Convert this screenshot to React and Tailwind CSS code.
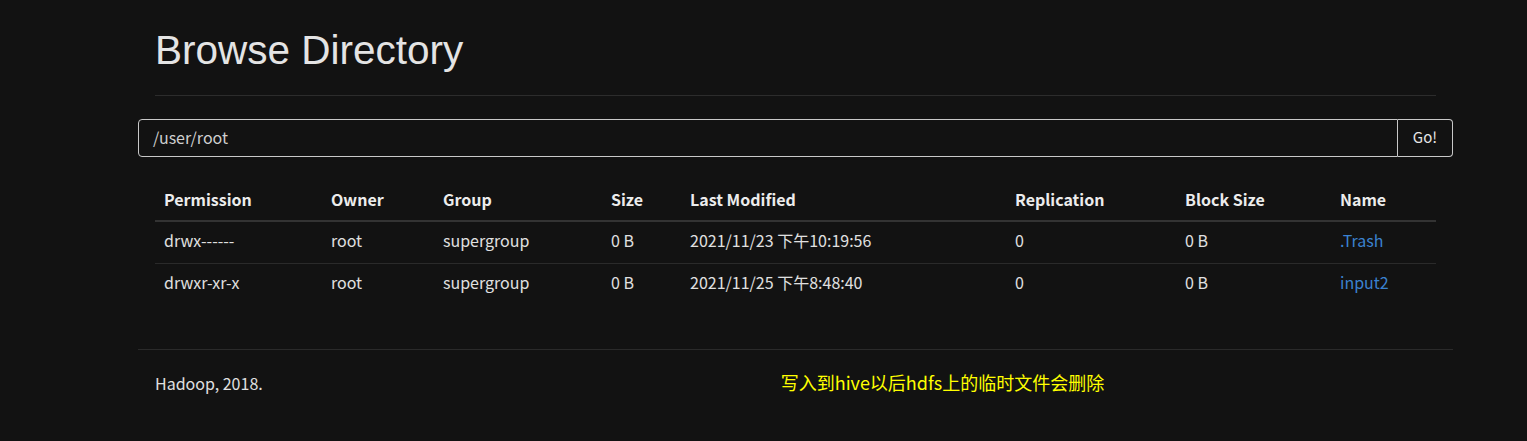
export default function App() {
  const rows = [
    { perm: 'drwx------', owner: 'root', group: 'supergroup', size: '0 B', mod: '2021/11/23 下午10:19:56', rep: '0', block: '0 B', name: '.Trash' },
    { perm: 'drwxr-xr-x', owner: 'root', group: 'supergroup', size: '0 B', mod: '2021/11/25 下午8:48:40', rep: '0', block: '0 B', name: 'input2' },
  ];
  const heads = ['Permission', 'Owner', 'Group', 'Size', 'Last Modified', 'Replication', 'Block Size', 'Name'];
  const widths = ['w-[167px]', 'w-[112px]', 'w-[168px]', 'w-[79px]', 'w-[325px]', 'w-[170px]', 'w-[155px]', 'w-auto'];

  return (
    <div className="min-h-screen bg-[#121212] text-[#e0e0e0] font-['Noto_Sans_CJK_SC',sans-serif] text-[16px]">
      <div className="ml-[138px] w-[1315px]">
        {/* header */}
        <div className="px-[17px] pt-[26px]">
          <h1 className="font-['Liberation_Sans',Arial,sans-serif] text-[40.5px] leading-[48px] text-[#e4e4e4]">
            Browse Directory
          </h1>
          <div className="mt-[21px] border-t border-[#2c2c2c]" />
        </div>

        {/* path input */}
        <div className="mt-[23px] flex h-[38px]">
          <div className="flex-1 flex items-center pl-[14px] pb-[3px] border border-[#c8c8c8] rounded-l-[4px] text-[#cfcfcf]">
            /user/root
          </div>
          <button className="w-[55px] pb-[2px] border border-l-0 border-[#c8c8c8] rounded-r-[4px] text-[#e6e6e6] text-[15px]">
            Go!
          </button>
        </div>

        {/* listing */}
        <div className="px-[17px] mt-[21px]">
          <table className="w-full table-fixed border-collapse">
            <thead>
              <tr className="border-b-2 border-[#333]">
                {heads.map((h, i) => (
                  <th key={h} className={`${widths[i]} text-left font-bold pl-[9px] pb-[1px] h-[43px] text-[#ececec]`}>
                    {h}
                  </th>
                ))}
              </tr>
            </thead>
            <tbody>
              {rows.map((r, idx) => (
                <tr key={r.name} className={`${idx === 0 ? 'border-b border-[#2a2a2a]' : ''} [&>td]:pl-[9px] [&>td]:pb-[4px]`}>
                  <td className="h-[42px]">{r.perm}</td>
                  <td>{r.owner}</td>
                  <td>{r.group}</td>
                  <td>{r.size}</td>
                  <td>{r.mod}</td>
                  <td>{r.rep}</td>
                  <td>{r.block}</td>
                  <td>
                    <a className="text-[#3b82d0]">{r.name}</a>
                  </td>
                </tr>
              ))}
            </tbody>
          </table>
        </div>

        {/* footer */}
        <div className="mt-[44px] border-t border-[#2a2a2a] pt-[19px] flex items-center px-[17px]">
          <span className="text-[#e0e0e0] text-[16px]">Hadoop, 2018.</span>
          <span className="ml-[518px] text-[18px] text-[#ffff00]">写入到hive以后hdfs上的临时文件会删除</span>
        </div>
      </div>
    </div>
  );
}
